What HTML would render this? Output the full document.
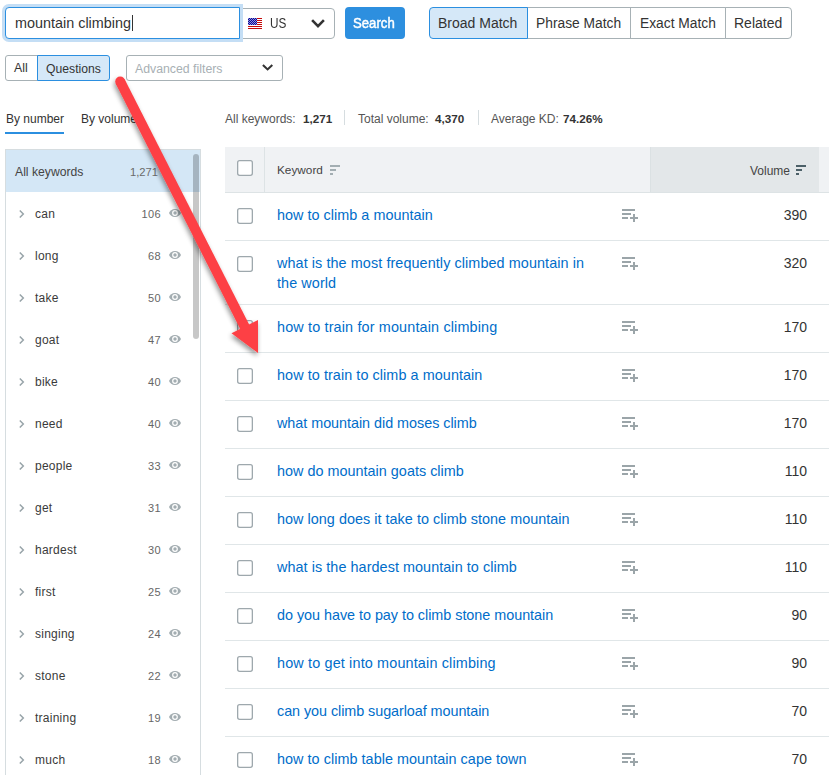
<!DOCTYPE html>
<html><head><meta charset="utf-8">
<style>
*{box-sizing:border-box;margin:0;padding:0}
html,body{width:829px;height:775px;overflow:hidden;background:#fff;font-family:"Liberation Sans",sans-serif;color:#333}
.a{position:absolute}
.t{position:absolute;white-space:nowrap;line-height:1}
#inp{left:5px;top:7px;width:235px;height:32px;border:1px solid #2b8fe0;border-radius:4px 0 0 4px;box-shadow:0 0 0 3px #c4def5;background:#fff;z-index:2}
#dd{left:239px;top:8px;width:96px;height:31px;border:1px solid #a7b1b5;border-radius:0 4px 4px 0;background:#fff}
#btn{left:345px;top:7px;width:60px;height:32px;background:#2d8fdf;border-radius:4px}
.seg{position:absolute;top:7px;height:32px;border:1px solid #a7b1b5;background:#fff}
.seg.on{background:#d5e8f8;border-color:#2b8fe0;z-index:2}
.tab2{position:absolute;top:55px;height:26px;border:1px solid #a7b1b5;background:#fff}
.tab2.on{background:#d5e8f8;border-color:#2b8fe0;z-index:2}
#adv{left:126px;top:55px;width:157px;height:26px;border:1px solid #a7b1b5;border-radius:3px}
#panel{left:5px;top:149px;width:196px;height:640px;border:1px solid #d6dde0;background:#fff}
#allrow{left:6px;top:150px;width:194px;height:42px;background:#d4e7f6}
#sb{left:193px;top:154px;width:6px;height:185px;border-radius:3px;background:rgba(0,0,0,0.22)}
#thead{left:225px;top:147px;width:604px;height:46px;background:#f0f2f4;border-bottom:1px solid #dde3e5}
#volh{left:650px;top:147px;width:169px;height:45px;background:#e3e7e9;border-left:1px solid #dbe1e3}
#kdiv{left:264px;top:147px;width:1px;height:45px;background:#dde3e5}
.rl{position:absolute;left:225px;width:604px;height:1px;background:#e0e6e8}
.cb{position:absolute;left:237px}
.kw{position:absolute;left:277px;font-size:14.4px;color:#006dca;line-height:20px;white-space:nowrap}
.vol{position:absolute;right:22px;font-size:14px;color:#333;line-height:1;white-space:nowrap}
.la{position:absolute;left:621px}
.chev{position:absolute;left:19px}
.eye{position:absolute;left:169px}
.sw{position:absolute;left:35px;font-size:12px;color:#3a3a3a;letter-spacing:0.25px;line-height:1;white-space:nowrap}
.sn{position:absolute;right:668px;font-size:11px;color:#666;letter-spacing:0.4px;line-height:1;white-space:nowrap}
</style></head><body>

<div id="dd" class="a"></div>
<div id="inp" class="a"></div>
<div class="t" style="left:15px;top:16px;font-size:14.4px;z-index:3">mountain climbing</div>
<div class="a" style="left:132px;top:15px;width:1px;height:16px;background:#333;z-index:3"></div>
<svg class="a" style="left:248px;top:18px" width="14" height="11" viewBox="0 0 14 11" shape-rendering="crispEdges"><rect width="14" height="11" fill="#fff"/><g fill="#c40a0a"><rect x="9" y="0" width="5" height="1"/><rect x="9" y="2" width="5" height="1"/><rect x="9" y="4" width="5" height="1"/><rect x="9" y="6" width="5" height="1"/><rect y="8" width="14" height="1"/><rect y="10" width="14" height="1"/></g><rect width="9" height="7" fill="#8e8ed8"/><g fill="#0a0a9a"><rect x="1" y="0" width="1" height="1"/><rect x="3" y="0" width="1" height="1"/><rect x="5" y="0" width="1" height="1"/><rect x="7" y="0" width="1" height="1"/><rect x="0" y="1" width="1" height="1"/><rect x="2" y="1" width="1" height="1"/><rect x="4" y="1" width="1" height="1"/><rect x="6" y="1" width="1" height="1"/><rect x="8" y="1" width="1" height="1"/><rect x="1" y="2" width="1" height="1"/><rect x="3" y="2" width="1" height="1"/><rect x="5" y="2" width="1" height="1"/><rect x="7" y="2" width="1" height="1"/><rect x="0" y="3" width="1" height="1"/><rect x="2" y="3" width="1" height="1"/><rect x="4" y="3" width="1" height="1"/><rect x="6" y="3" width="1" height="1"/><rect x="8" y="3" width="1" height="1"/><rect x="1" y="4" width="1" height="1"/><rect x="3" y="4" width="1" height="1"/><rect x="5" y="4" width="1" height="1"/><rect x="7" y="4" width="1" height="1"/><rect x="0" y="5" width="1" height="1"/><rect x="2" y="5" width="1" height="1"/><rect x="4" y="5" width="1" height="1"/><rect x="6" y="5" width="1" height="1"/><rect x="8" y="5" width="1" height="1"/><rect x="1" y="6" width="1" height="1"/><rect x="3" y="6" width="1" height="1"/><rect x="5" y="6" width="1" height="1"/><rect x="7" y="6" width="1" height="1"/></g></svg>
<div class="t" style="left:270px;top:16px;font-size:14px;transform:scaleX(0.84);transform-origin:0 0">US</div>
<svg class="a" style="left:311px;top:18px" width="15" height="11" viewBox="0 0 15 11"><path d="M1.1 2.2l5.9 5.9 5.9-5.9" fill="none" stroke="#333" stroke-width="2.6"/></svg>

<div id="btn" class="a"></div>
<div class="t" style="left:353px;top:16px;font-size:14px;color:#fff;-webkit-text-stroke:0.45px #fff;transform:scaleX(0.94);transform-origin:0 0">Search</div>

<div class="seg on" style="left:429px;width:99px;border-radius:4px 0 0 4px"></div>
<div class="seg" style="left:527px;width:104px"></div>
<div class="seg" style="left:630px;width:96px"></div>
<div class="seg" style="left:725px;width:67px;border-radius:0 4px 4px 0"></div>
<div class="t" style="left:438px;top:16px;font-size:14px;z-index:3">Broad Match</div>
<div class="t" style="left:536px;top:17px;font-size:13.8px">Phrase Match</div>
<div class="t" style="left:640px;top:17px;font-size:13.8px">Exact Match</div>
<div class="t" style="left:734px;top:16px;font-size:14px">Related</div>

<div class="tab2" style="left:5px;width:33px;border-radius:3px 0 0 3px"></div>
<div class="tab2 on" style="left:37px;width:73px;border-radius:0 3px 3px 0"></div>
<div class="t" style="left:14px;top:62px;font-size:12.3px">All</div>
<div class="t" style="left:46px;top:63px;font-size:12.2px;z-index:3">Questions</div>
<div id="adv" class="a"></div>
<div class="t" style="left:135px;top:63px;font-size:12.3px;color:#a8b0b4">Advanced filters</div>
<svg class="a" style="left:262px;top:63px" width="12" height="9" viewBox="0 0 12 9"><path d="M0.9 2l4.7 4.4 4.7-4.4" fill="none" stroke="#333" stroke-width="2.1"/></svg>

<div class="t" style="left:6px;top:113px;font-size:12px">By number</div>
<div class="a" style="left:5px;top:132px;width:59px;height:2px;background:#2b8fe0"></div>
<div class="t" style="left:81px;top:113px;font-size:12px">By volume</div>

<div class="t" style="left:225px;top:113px;font-size:12px;color:#555">All keywords:</div>
<div class="t" style="left:303px;top:113px;font-size:11.7px;font-weight:bold">1,271</div>
<div class="a" style="left:344px;top:110px;width:1px;height:15px;background:#d6dde0"></div>
<div class="t" style="left:358px;top:113px;font-size:12px;color:#555">Total volume:</div>
<div class="t" style="left:435px;top:113px;font-size:11.7px;font-weight:bold">4,370</div>
<div class="a" style="left:478px;top:110px;width:1px;height:15px;background:#d6dde0"></div>
<div class="t" style="left:491px;top:113px;font-size:12px;color:#555">Average KD:</div>
<div class="t" style="left:563px;top:113px;font-size:11.7px;font-weight:bold">74.26%</div>

<div id="panel" class="a"></div>
<div id="allrow" class="a"></div>
<div class="t" style="left:15px;top:166px;font-size:12.2px;color:#444">All keywords</div>
<div class="t" style="left:130px;top:167px;font-size:11.2px;color:#6a6a6a">1,271</div>
<div id="sb" class="a"></div>

<div id="thead" class="a"></div>
<div id="volh" class="a"></div>
<div id="kdiv" class="a"></div>
<svg class="cb" style="top:160px" width="16" height="16" viewBox="0 0 16 16"><rect x="0.65" y="0.65" width="14.7" height="14.7" rx="2" fill="#fff" stroke="#9ea8ad" stroke-width="1.3"/></svg>
<div class="t" style="left:277px;top:165px;font-size:11.8px;color:#444">Keyword</div>
<svg class="a" style="left:330px;top:165px" width="10" height="10" viewBox="0 0 10 10"><g fill="#a3aeb2"><rect x="0" y="0" width="10" height="2"/><rect x="0" y="4" width="6" height="2"/><rect x="0" y="8" width="3" height="2"/></g></svg>
<div class="t" style="left:750px;top:165px;font-size:12px;color:#444">Volume</div>
<svg class="a" style="left:796px;top:165px" width="10" height="10" viewBox="0 0 10 10"><g fill="#4c6068"><rect x="0" y="0" width="10" height="2"/><rect x="0" y="4" width="6" height="2"/><rect x="0" y="8" width="3" height="2"/></g></svg>

<div class="rl" style="top:240px"></div>
<svg class="cb" style="top:208px" width="16" height="16" viewBox="0 0 16 16"><rect x="0.65" y="0.65" width="14.7" height="14.7" rx="2" fill="#fff" stroke="#9ea8ad" stroke-width="1.3"/></svg>
<div class="kw" style="top:205px;letter-spacing:0.027px">how to climb a mountain</div>
<svg class="la" style="top:208px" width="18" height="14" viewBox="0 0 18 14"><g fill="#9ba5a9"><rect x="1" y="1" width="13" height="2"/><rect x="1" y="5" width="9" height="2"/><rect x="1" y="9" width="6" height="2"/><rect x="9" y="9" width="8" height="2"/><rect x="12" y="6" width="2" height="8"/></g></svg>
<div class="vol" style="top:208px">390</div>
<div class="rl" style="top:304px"></div>
<svg class="cb" style="top:256px" width="16" height="16" viewBox="0 0 16 16"><rect x="0.65" y="0.65" width="14.7" height="14.7" rx="2" fill="#fff" stroke="#9ea8ad" stroke-width="1.3"/></svg>
<div class="kw" style="top:253px;letter-spacing:0.083px">what is the most frequently climbed mountain in<br>the world</div>
<svg class="la" style="top:256px" width="18" height="14" viewBox="0 0 18 14"><g fill="#9ba5a9"><rect x="1" y="1" width="13" height="2"/><rect x="1" y="5" width="9" height="2"/><rect x="1" y="9" width="6" height="2"/><rect x="9" y="9" width="8" height="2"/><rect x="12" y="6" width="2" height="8"/></g></svg>
<div class="vol" style="top:256px">320</div>
<div class="rl" style="top:352px"></div>
<svg class="cb" style="top:320px" width="16" height="16" viewBox="0 0 16 16"><rect x="0.65" y="0.65" width="14.7" height="14.7" rx="2" fill="#fff" stroke="#9ea8ad" stroke-width="1.3"/></svg>
<div class="kw" style="top:317px;letter-spacing:0.155px">how to train for mountain climbing</div>
<svg class="la" style="top:320px" width="18" height="14" viewBox="0 0 18 14"><g fill="#9ba5a9"><rect x="1" y="1" width="13" height="2"/><rect x="1" y="5" width="9" height="2"/><rect x="1" y="9" width="6" height="2"/><rect x="9" y="9" width="8" height="2"/><rect x="12" y="6" width="2" height="8"/></g></svg>
<div class="vol" style="top:320px">170</div>
<div class="rl" style="top:400px"></div>
<svg class="cb" style="top:368px" width="16" height="16" viewBox="0 0 16 16"><rect x="0.65" y="0.65" width="14.7" height="14.7" rx="2" fill="#fff" stroke="#9ea8ad" stroke-width="1.3"/></svg>
<div class="kw" style="top:365px;letter-spacing:0.071px">how to train to climb a mountain</div>
<svg class="la" style="top:368px" width="18" height="14" viewBox="0 0 18 14"><g fill="#9ba5a9"><rect x="1" y="1" width="13" height="2"/><rect x="1" y="5" width="9" height="2"/><rect x="1" y="9" width="6" height="2"/><rect x="9" y="9" width="8" height="2"/><rect x="12" y="6" width="2" height="8"/></g></svg>
<div class="vol" style="top:368px">170</div>
<div class="rl" style="top:448px"></div>
<svg class="cb" style="top:416px" width="16" height="16" viewBox="0 0 16 16"><rect x="0.65" y="0.65" width="14.7" height="14.7" rx="2" fill="#fff" stroke="#9ea8ad" stroke-width="1.3"/></svg>
<div class="kw" style="top:413px;letter-spacing:-0.039px">what mountain did moses climb</div>
<svg class="la" style="top:416px" width="18" height="14" viewBox="0 0 18 14"><g fill="#9ba5a9"><rect x="1" y="1" width="13" height="2"/><rect x="1" y="5" width="9" height="2"/><rect x="1" y="9" width="6" height="2"/><rect x="9" y="9" width="8" height="2"/><rect x="12" y="6" width="2" height="8"/></g></svg>
<div class="vol" style="top:416px">170</div>
<div class="rl" style="top:496px"></div>
<svg class="cb" style="top:464px" width="16" height="16" viewBox="0 0 16 16"><rect x="0.65" y="0.65" width="14.7" height="14.7" rx="2" fill="#fff" stroke="#9ea8ad" stroke-width="1.3"/></svg>
<div class="kw" style="top:461px;letter-spacing:0.015px">how do mountain goats climb</div>
<svg class="la" style="top:464px" width="18" height="14" viewBox="0 0 18 14"><g fill="#9ba5a9"><rect x="1" y="1" width="13" height="2"/><rect x="1" y="5" width="9" height="2"/><rect x="1" y="9" width="6" height="2"/><rect x="9" y="9" width="8" height="2"/><rect x="12" y="6" width="2" height="8"/></g></svg>
<div class="vol" style="top:464px">110</div>
<div class="rl" style="top:544px"></div>
<svg class="cb" style="top:512px" width="16" height="16" viewBox="0 0 16 16"><rect x="0.65" y="0.65" width="14.7" height="14.7" rx="2" fill="#fff" stroke="#9ea8ad" stroke-width="1.3"/></svg>
<div class="kw" style="top:509px;letter-spacing:0.032px">how long does it take to climb stone mountain</div>
<svg class="la" style="top:512px" width="18" height="14" viewBox="0 0 18 14"><g fill="#9ba5a9"><rect x="1" y="1" width="13" height="2"/><rect x="1" y="5" width="9" height="2"/><rect x="1" y="9" width="6" height="2"/><rect x="9" y="9" width="8" height="2"/><rect x="12" y="6" width="2" height="8"/></g></svg>
<div class="vol" style="top:512px">110</div>
<div class="rl" style="top:592px"></div>
<svg class="cb" style="top:560px" width="16" height="16" viewBox="0 0 16 16"><rect x="0.65" y="0.65" width="14.7" height="14.7" rx="2" fill="#fff" stroke="#9ea8ad" stroke-width="1.3"/></svg>
<div class="kw" style="top:557px;letter-spacing:0.061px">what is the hardest mountain to climb</div>
<svg class="la" style="top:560px" width="18" height="14" viewBox="0 0 18 14"><g fill="#9ba5a9"><rect x="1" y="1" width="13" height="2"/><rect x="1" y="5" width="9" height="2"/><rect x="1" y="9" width="6" height="2"/><rect x="9" y="9" width="8" height="2"/><rect x="12" y="6" width="2" height="8"/></g></svg>
<div class="vol" style="top:560px">110</div>
<div class="rl" style="top:640px"></div>
<svg class="cb" style="top:608px" width="16" height="16" viewBox="0 0 16 16"><rect x="0.65" y="0.65" width="14.7" height="14.7" rx="2" fill="#fff" stroke="#9ea8ad" stroke-width="1.3"/></svg>
<div class="kw" style="top:605px;letter-spacing:-0.034px">do you have to pay to climb stone mountain</div>
<svg class="la" style="top:608px" width="18" height="14" viewBox="0 0 18 14"><g fill="#9ba5a9"><rect x="1" y="1" width="13" height="2"/><rect x="1" y="5" width="9" height="2"/><rect x="1" y="9" width="6" height="2"/><rect x="9" y="9" width="8" height="2"/><rect x="12" y="6" width="2" height="8"/></g></svg>
<div class="vol" style="top:608px">90</div>
<div class="rl" style="top:688px"></div>
<svg class="cb" style="top:656px" width="16" height="16" viewBox="0 0 16 16"><rect x="0.65" y="0.65" width="14.7" height="14.7" rx="2" fill="#fff" stroke="#9ea8ad" stroke-width="1.3"/></svg>
<div class="kw" style="top:653px;letter-spacing:0.156px">how to get into mountain climbing</div>
<svg class="la" style="top:656px" width="18" height="14" viewBox="0 0 18 14"><g fill="#9ba5a9"><rect x="1" y="1" width="13" height="2"/><rect x="1" y="5" width="9" height="2"/><rect x="1" y="9" width="6" height="2"/><rect x="9" y="9" width="8" height="2"/><rect x="12" y="6" width="2" height="8"/></g></svg>
<div class="vol" style="top:656px">90</div>
<div class="rl" style="top:736px"></div>
<svg class="cb" style="top:704px" width="16" height="16" viewBox="0 0 16 16"><rect x="0.65" y="0.65" width="14.7" height="14.7" rx="2" fill="#fff" stroke="#9ea8ad" stroke-width="1.3"/></svg>
<div class="kw" style="top:701px;letter-spacing:-0.065px">can you climb sugarloaf mountain</div>
<svg class="la" style="top:704px" width="18" height="14" viewBox="0 0 18 14"><g fill="#9ba5a9"><rect x="1" y="1" width="13" height="2"/><rect x="1" y="5" width="9" height="2"/><rect x="1" y="9" width="6" height="2"/><rect x="9" y="9" width="8" height="2"/><rect x="12" y="6" width="2" height="8"/></g></svg>
<div class="vol" style="top:704px">70</div>
<div class="rl" style="top:784px"></div>
<svg class="cb" style="top:752px" width="16" height="16" viewBox="0 0 16 16"><rect x="0.65" y="0.65" width="14.7" height="14.7" rx="2" fill="#fff" stroke="#9ea8ad" stroke-width="1.3"/></svg>
<div class="kw" style="top:749px;letter-spacing:0.044px">how to climb table mountain cape town</div>
<svg class="la" style="top:752px" width="18" height="14" viewBox="0 0 18 14"><g fill="#9ba5a9"><rect x="1" y="1" width="13" height="2"/><rect x="1" y="5" width="9" height="2"/><rect x="1" y="9" width="6" height="2"/><rect x="9" y="9" width="8" height="2"/><rect x="12" y="6" width="2" height="8"/></g></svg>
<div class="vol" style="top:752px">70</div>
<svg class="chev" style="top:209px" width="6" height="9" viewBox="0 0 6 9"><path d="M0.8 1.5l3.5 3.5L0.8 8.5" fill="none" stroke="#98a4a9" stroke-width="1.5"/></svg>
<div class="sw" style="top:208px">can</div>
<div class="sn" style="top:209px">106</div>
<svg class="eye" style="top:209px" width="12" height="8" viewBox="0 0 12 8"><path d="M6 0C3 0 0.9 1.9 0 4 0.9 6.1 3 8 6 8S11.1 6.1 12 4C11.1 1.9 9 0 6 0Z" fill="#a3adb1"/><circle cx="6" cy="4" r="2.9" fill="#fff"/><circle cx="6" cy="4" r="1.7" fill="#a3adb1"/></svg>
<svg class="chev" style="top:251px" width="6" height="9" viewBox="0 0 6 9"><path d="M0.8 1.5l3.5 3.5L0.8 8.5" fill="none" stroke="#98a4a9" stroke-width="1.5"/></svg>
<div class="sw" style="top:250px">long</div>
<div class="sn" style="top:251px">68</div>
<svg class="eye" style="top:251px" width="12" height="8" viewBox="0 0 12 8"><path d="M6 0C3 0 0.9 1.9 0 4 0.9 6.1 3 8 6 8S11.1 6.1 12 4C11.1 1.9 9 0 6 0Z" fill="#a3adb1"/><circle cx="6" cy="4" r="2.9" fill="#fff"/><circle cx="6" cy="4" r="1.7" fill="#a3adb1"/></svg>
<svg class="chev" style="top:293px" width="6" height="9" viewBox="0 0 6 9"><path d="M0.8 1.5l3.5 3.5L0.8 8.5" fill="none" stroke="#98a4a9" stroke-width="1.5"/></svg>
<div class="sw" style="top:292px">take</div>
<div class="sn" style="top:293px">50</div>
<svg class="eye" style="top:293px" width="12" height="8" viewBox="0 0 12 8"><path d="M6 0C3 0 0.9 1.9 0 4 0.9 6.1 3 8 6 8S11.1 6.1 12 4C11.1 1.9 9 0 6 0Z" fill="#a3adb1"/><circle cx="6" cy="4" r="2.9" fill="#fff"/><circle cx="6" cy="4" r="1.7" fill="#a3adb1"/></svg>
<svg class="chev" style="top:335px" width="6" height="9" viewBox="0 0 6 9"><path d="M0.8 1.5l3.5 3.5L0.8 8.5" fill="none" stroke="#98a4a9" stroke-width="1.5"/></svg>
<div class="sw" style="top:334px">goat</div>
<div class="sn" style="top:335px">47</div>
<svg class="eye" style="top:335px" width="12" height="8" viewBox="0 0 12 8"><path d="M6 0C3 0 0.9 1.9 0 4 0.9 6.1 3 8 6 8S11.1 6.1 12 4C11.1 1.9 9 0 6 0Z" fill="#a3adb1"/><circle cx="6" cy="4" r="2.9" fill="#fff"/><circle cx="6" cy="4" r="1.7" fill="#a3adb1"/></svg>
<svg class="chev" style="top:377px" width="6" height="9" viewBox="0 0 6 9"><path d="M0.8 1.5l3.5 3.5L0.8 8.5" fill="none" stroke="#98a4a9" stroke-width="1.5"/></svg>
<div class="sw" style="top:376px">bike</div>
<div class="sn" style="top:377px">40</div>
<svg class="eye" style="top:377px" width="12" height="8" viewBox="0 0 12 8"><path d="M6 0C3 0 0.9 1.9 0 4 0.9 6.1 3 8 6 8S11.1 6.1 12 4C11.1 1.9 9 0 6 0Z" fill="#a3adb1"/><circle cx="6" cy="4" r="2.9" fill="#fff"/><circle cx="6" cy="4" r="1.7" fill="#a3adb1"/></svg>
<svg class="chev" style="top:419px" width="6" height="9" viewBox="0 0 6 9"><path d="M0.8 1.5l3.5 3.5L0.8 8.5" fill="none" stroke="#98a4a9" stroke-width="1.5"/></svg>
<div class="sw" style="top:418px">need</div>
<div class="sn" style="top:419px">40</div>
<svg class="eye" style="top:419px" width="12" height="8" viewBox="0 0 12 8"><path d="M6 0C3 0 0.9 1.9 0 4 0.9 6.1 3 8 6 8S11.1 6.1 12 4C11.1 1.9 9 0 6 0Z" fill="#a3adb1"/><circle cx="6" cy="4" r="2.9" fill="#fff"/><circle cx="6" cy="4" r="1.7" fill="#a3adb1"/></svg>
<svg class="chev" style="top:461px" width="6" height="9" viewBox="0 0 6 9"><path d="M0.8 1.5l3.5 3.5L0.8 8.5" fill="none" stroke="#98a4a9" stroke-width="1.5"/></svg>
<div class="sw" style="top:460px">people</div>
<div class="sn" style="top:461px">33</div>
<svg class="eye" style="top:461px" width="12" height="8" viewBox="0 0 12 8"><path d="M6 0C3 0 0.9 1.9 0 4 0.9 6.1 3 8 6 8S11.1 6.1 12 4C11.1 1.9 9 0 6 0Z" fill="#a3adb1"/><circle cx="6" cy="4" r="2.9" fill="#fff"/><circle cx="6" cy="4" r="1.7" fill="#a3adb1"/></svg>
<svg class="chev" style="top:503px" width="6" height="9" viewBox="0 0 6 9"><path d="M0.8 1.5l3.5 3.5L0.8 8.5" fill="none" stroke="#98a4a9" stroke-width="1.5"/></svg>
<div class="sw" style="top:502px">get</div>
<div class="sn" style="top:503px">31</div>
<svg class="eye" style="top:503px" width="12" height="8" viewBox="0 0 12 8"><path d="M6 0C3 0 0.9 1.9 0 4 0.9 6.1 3 8 6 8S11.1 6.1 12 4C11.1 1.9 9 0 6 0Z" fill="#a3adb1"/><circle cx="6" cy="4" r="2.9" fill="#fff"/><circle cx="6" cy="4" r="1.7" fill="#a3adb1"/></svg>
<svg class="chev" style="top:545px" width="6" height="9" viewBox="0 0 6 9"><path d="M0.8 1.5l3.5 3.5L0.8 8.5" fill="none" stroke="#98a4a9" stroke-width="1.5"/></svg>
<div class="sw" style="top:544px">hardest</div>
<div class="sn" style="top:545px">30</div>
<svg class="eye" style="top:545px" width="12" height="8" viewBox="0 0 12 8"><path d="M6 0C3 0 0.9 1.9 0 4 0.9 6.1 3 8 6 8S11.1 6.1 12 4C11.1 1.9 9 0 6 0Z" fill="#a3adb1"/><circle cx="6" cy="4" r="2.9" fill="#fff"/><circle cx="6" cy="4" r="1.7" fill="#a3adb1"/></svg>
<svg class="chev" style="top:587px" width="6" height="9" viewBox="0 0 6 9"><path d="M0.8 1.5l3.5 3.5L0.8 8.5" fill="none" stroke="#98a4a9" stroke-width="1.5"/></svg>
<div class="sw" style="top:586px">first</div>
<div class="sn" style="top:587px">25</div>
<svg class="eye" style="top:587px" width="12" height="8" viewBox="0 0 12 8"><path d="M6 0C3 0 0.9 1.9 0 4 0.9 6.1 3 8 6 8S11.1 6.1 12 4C11.1 1.9 9 0 6 0Z" fill="#a3adb1"/><circle cx="6" cy="4" r="2.9" fill="#fff"/><circle cx="6" cy="4" r="1.7" fill="#a3adb1"/></svg>
<svg class="chev" style="top:629px" width="6" height="9" viewBox="0 0 6 9"><path d="M0.8 1.5l3.5 3.5L0.8 8.5" fill="none" stroke="#98a4a9" stroke-width="1.5"/></svg>
<div class="sw" style="top:628px">singing</div>
<div class="sn" style="top:629px">24</div>
<svg class="eye" style="top:629px" width="12" height="8" viewBox="0 0 12 8"><path d="M6 0C3 0 0.9 1.9 0 4 0.9 6.1 3 8 6 8S11.1 6.1 12 4C11.1 1.9 9 0 6 0Z" fill="#a3adb1"/><circle cx="6" cy="4" r="2.9" fill="#fff"/><circle cx="6" cy="4" r="1.7" fill="#a3adb1"/></svg>
<svg class="chev" style="top:671px" width="6" height="9" viewBox="0 0 6 9"><path d="M0.8 1.5l3.5 3.5L0.8 8.5" fill="none" stroke="#98a4a9" stroke-width="1.5"/></svg>
<div class="sw" style="top:670px">stone</div>
<div class="sn" style="top:671px">22</div>
<svg class="eye" style="top:671px" width="12" height="8" viewBox="0 0 12 8"><path d="M6 0C3 0 0.9 1.9 0 4 0.9 6.1 3 8 6 8S11.1 6.1 12 4C11.1 1.9 9 0 6 0Z" fill="#a3adb1"/><circle cx="6" cy="4" r="2.9" fill="#fff"/><circle cx="6" cy="4" r="1.7" fill="#a3adb1"/></svg>
<svg class="chev" style="top:713px" width="6" height="9" viewBox="0 0 6 9"><path d="M0.8 1.5l3.5 3.5L0.8 8.5" fill="none" stroke="#98a4a9" stroke-width="1.5"/></svg>
<div class="sw" style="top:712px">training</div>
<div class="sn" style="top:713px">19</div>
<svg class="eye" style="top:713px" width="12" height="8" viewBox="0 0 12 8"><path d="M6 0C3 0 0.9 1.9 0 4 0.9 6.1 3 8 6 8S11.1 6.1 12 4C11.1 1.9 9 0 6 0Z" fill="#a3adb1"/><circle cx="6" cy="4" r="2.9" fill="#fff"/><circle cx="6" cy="4" r="1.7" fill="#a3adb1"/></svg>
<svg class="chev" style="top:755px" width="6" height="9" viewBox="0 0 6 9"><path d="M0.8 1.5l3.5 3.5L0.8 8.5" fill="none" stroke="#98a4a9" stroke-width="1.5"/></svg>
<div class="sw" style="top:754px">much</div>
<div class="sn" style="top:755px">18</div>
<svg class="eye" style="top:755px" width="12" height="8" viewBox="0 0 12 8"><path d="M6 0C3 0 0.9 1.9 0 4 0.9 6.1 3 8 6 8S11.1 6.1 12 4C11.1 1.9 9 0 6 0Z" fill="#a3adb1"/><circle cx="6" cy="4" r="2.9" fill="#fff"/><circle cx="6" cy="4" r="1.7" fill="#a3adb1"/></svg>

<svg class="a" style="left:0;top:0;z-index:10" width="829" height="775" viewBox="0 0 829 775">
<defs><filter id="sh" x="-50%" y="-50%" width="200%" height="200%"><feGaussianBlur in="SourceAlpha" stdDeviation="2.5"/><feOffset dx="-1" dy="3"/><feComponentTransfer><feFuncA type="linear" slope="0.42"/></feComponentTransfer><feMerge><feMergeNode/><feMergeNode in="SourceGraphic"/></feMerge></filter></defs>
<g filter="url(#sh)" fill="#fd4045">
<circle cx="120.2" cy="81.5" r="5"/><line x1="120.2" y1="81.5" x2="250.9" y2="339" stroke="#fd4045" stroke-width="10"/>
<polygon points="258,320 231.5,333.3 258,353"/>
</g>
</svg>
</body></html>
